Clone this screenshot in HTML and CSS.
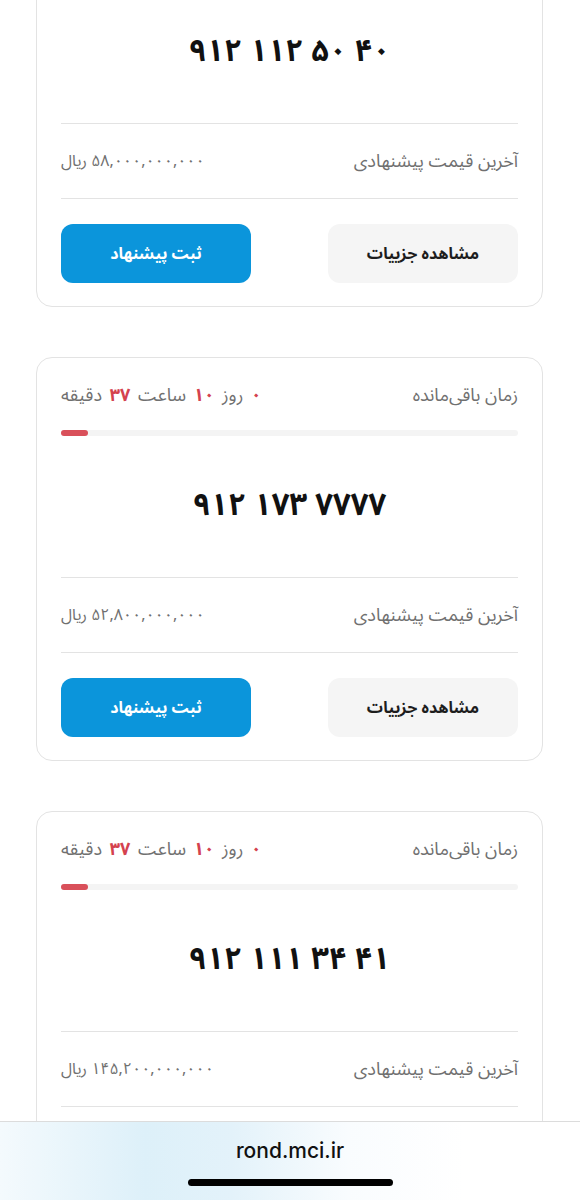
FILE: index.html
```html
<!DOCTYPE html>
<html lang="fa" dir="rtl">
<head>
  <meta charset="UTF-8" />
  <title>رُند - مزایده سیم‌کارت</title>
  <link rel="stylesheet" href="styles.css">
</head>
<body>

  <!-- لیست مزایده‌ها (صفحه کمی اسکرول شده) -->
  <div class="list">

    <div class="card card-cut">
      <div class="number">۹۱۲ ۱۱۲ ۵۰ ۴۰</div>
      <div class="price-row">
        <span class="label">آخرین قیمت پیشنهادی</span>
        <span class="price">۵۸,۰۰۰,۰۰۰,۰۰۰ ریال</span>
      </div>
      <div class="actions">
        <button class="btn btn-light">مشاهده جزییات</button>
        <button class="btn btn-blue">ثبت پیشنهاد</button>
      </div>
    </div>

    <div class="card">
      <div class="time-row">
        <span class="label">زمان باقی‌مانده</span>
        <span class="remain"><b>۰</b> روز <b>۱۰</b> ساعت <b>۳۷</b> دقیقه</span>
      </div>
      <div class="progress"><div class="fill" style="width: 6%"></div></div>
      <div class="number">۹۱۲ ۱۷۳ ۷۷۷۷</div>
      <div class="price-row">
        <span class="label">آخرین قیمت پیشنهادی</span>
        <span class="price">۵۲,۸۰۰,۰۰۰,۰۰۰ ریال</span>
      </div>
      <div class="actions">
        <button class="btn btn-light">مشاهده جزییات</button>
        <button class="btn btn-blue">ثبت پیشنهاد</button>
      </div>
    </div>

    <div class="card">
      <div class="time-row">
        <span class="label">زمان باقی‌مانده</span>
        <span class="remain"><b>۰</b> روز <b>۱۰</b> ساعت <b>۳۷</b> دقیقه</span>
      </div>
      <div class="progress"><div class="fill" style="width: 6%"></div></div>
      <div class="number">۹۱۲ ۱۱۱ ۳۴ ۴۱</div>
      <div class="price-row">
        <span class="label">آخرین قیمت پیشنهادی</span>
        <span class="price">۱۴۵,۲۰۰,۰۰۰,۰۰۰ ریال</span>
      </div>
      <div class="actions">
        <button class="btn btn-light">مشاهده جزییات</button>
        <button class="btn btn-blue">ثبت پیشنهاد</button>
      </div>
    </div>

  </div>

  <!-- نوار آدرس مرورگر -->
  <div class="url-bar">
    <div class="url">rond.mci.ir</div>
    <div class="home-bar"></div>
  </div>

</body>
</html>
```

FILE: styles.css
```css
body {
  margin: 0;
  background: #fff;
  font-family: "Noto Sans Arabic", "DejaVu Sans", sans-serif;
  color: #222;
}

.list {
  display: flex;
  flex-direction: column;
  gap: 50px;
  margin-top: -42px;
  padding: 0 37px 0 36px;
}

.card {
  border: 1px solid #e3e3e3;
  border-radius: 16px;
  padding: 23px 24px 23px;
}

.time-row,
.price-row {
  display: flex;
  justify-content: space-between;
  align-items: center;
  height: 28px;
  font-size: 18px;
  color: #707070;
}

.remain {
  word-spacing: 3px;
}

.remain b {
  color: #d4424e;
  font-weight: 700;
}

.progress {
  direction: ltr;
  margin-top: 21px;
  height: 6px;
  border-radius: 3px;
  background: #f4f4f4;
}

.progress .fill {
  height: 6px;
  border-radius: 3px;
  background: #d9505a;
}

.number {
  direction: ltr;
  text-align: center;
  margin: 49px 0 52px;
  height: 40px;
  line-height: 40px;
  font-size: 31px;
  font-weight: 700;
  color: #111;
}

.price-row {
  border-top: 1px solid #e3e3e3;
  border-bottom: 1px solid #e3e3e3;
  padding: 23px 0;
}

.price {
  font-size: 16px;
}

.actions {
  display: flex;
  justify-content: space-between;
  margin-top: 25px;
}

.btn {
  width: 190px;
  height: 59px;
  border: none;
  border-radius: 12px;
  font-family: inherit;
  font-size: 16px;
  font-weight: 700;
  cursor: pointer;
}

.btn-light {
  background: #f5f5f5;
  color: #1d1d1d;
}

.btn-blue {
  background: #0b95db;
  color: #fff;
}

.url-bar {
  position: fixed;
  left: 0;
  right: 0;
  bottom: 0;
  height: 78px;
  border-top: 1px solid #dcdcdc;
  background: linear-gradient(90deg, #f4fafd 0%, #ddf0f9 25%, #e3f2fa 40%, #f9fcfe 60%, #fff 80%);
  display: flex;
  flex-direction: column;
  align-items: center;
}

.url {
  direction: ltr;
  margin-top: 16px;
  font-family: "Inter", "Roboto", sans-serif;
  font-size: 21px;
  font-weight: 500;
  color: #111;
}

.home-bar {
  margin-top: 16px;
  width: 205px;
  height: 7px;
  border-radius: 4px;
  background: #000;
}
```
